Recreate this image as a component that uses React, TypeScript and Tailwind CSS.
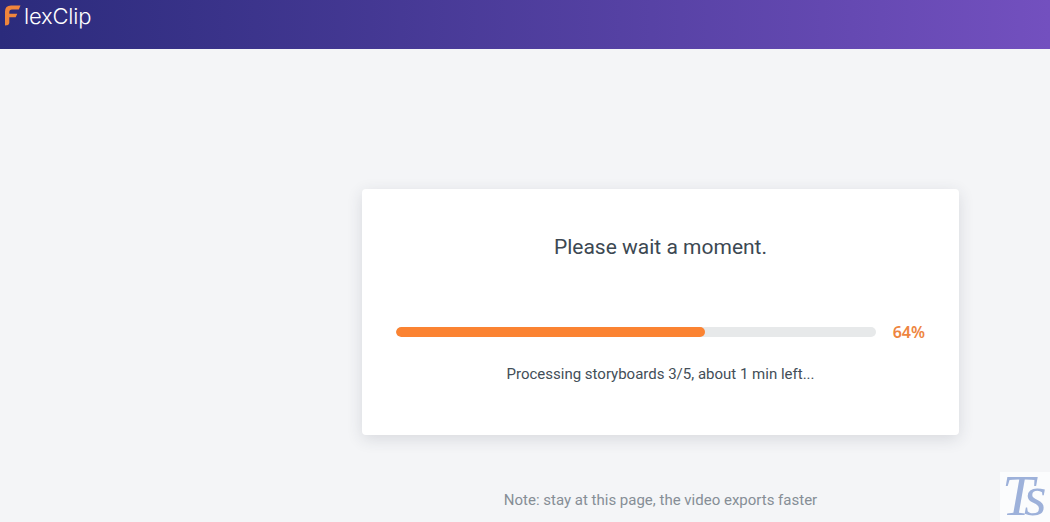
export default function App() {
  return (
    <div className="relative h-[522px] w-[1050px] overflow-hidden bg-[#f4f5f7] font-['Roboto',sans-serif]">
      <header className="flex h-[49px] items-start bg-gradient-to-r from-[#2b2b7c] to-[#7350bf] pl-[5px] pt-[1px]">
        <svg width="16" height="22" viewBox="0 0 16 22" className="mt-[4px]">
          <path d="M0 20.5 V6.5 Q0 0.5 6 0.5 H15.5 L13.8 4.5 H7 Q4.3 4.5 4.3 7.2 V8.8 H12.3 L10.7 12.3 H4.3 V18 Q4 20.5 0 20.5 Z" fill="#f0853c" />
        </svg>
        <span className="ml-[3px] font-['Inter',sans-serif] text-[22px] leading-[30px] font-light tracking-[-0.2px] text-white">lexClip</span>
      </header>
      <main className="flex flex-col items-start pl-[362px] pt-[140px]">
        <section className="flex h-[246px] w-[597px] flex-col rounded-[4px] bg-white px-[34px] shadow-[0_4px_16px_rgba(40,50,70,0.14)]">
          <h1 className="mt-[44px] text-center text-[21px] leading-[28px] font-normal text-[#3c4852]">Please wait a moment.</h1>
          <div className="mt-[61px] flex items-center">
            <div className="h-[10px] w-[480px] overflow-hidden rounded-full bg-[#e7e9ea]">
              <div className="h-full w-[309px] rounded-full bg-[#fb8332]" />
            </div>
            <span className="ml-[17px] font-['Noto_Sans',sans-serif] text-[16px] leading-[20px] font-semibold text-[#ee8540]">64%</span>
          </div>
          <p className="mt-[22px] text-center text-[15px] leading-[20px] text-[#434e58]">Processing storyboards 3/5, about 1 min left...</p>
        </section>
        <p className="mt-[55px] w-[597px] text-center text-[15px] leading-[20px] text-[#868e96]">Note: stay at this page, the video exports faster</p>
      </main>
      <div className="absolute right-0 bottom-0 flex h-[50px] w-[50px] items-end bg-[#fbfcfd] pl-[2px] pb-[2px] font-['Liberation_Serif',serif] text-[58px] leading-[48px] tracking-[-5px] text-[#9db1da] italic">Ts</div>
    </div>
  );
}
